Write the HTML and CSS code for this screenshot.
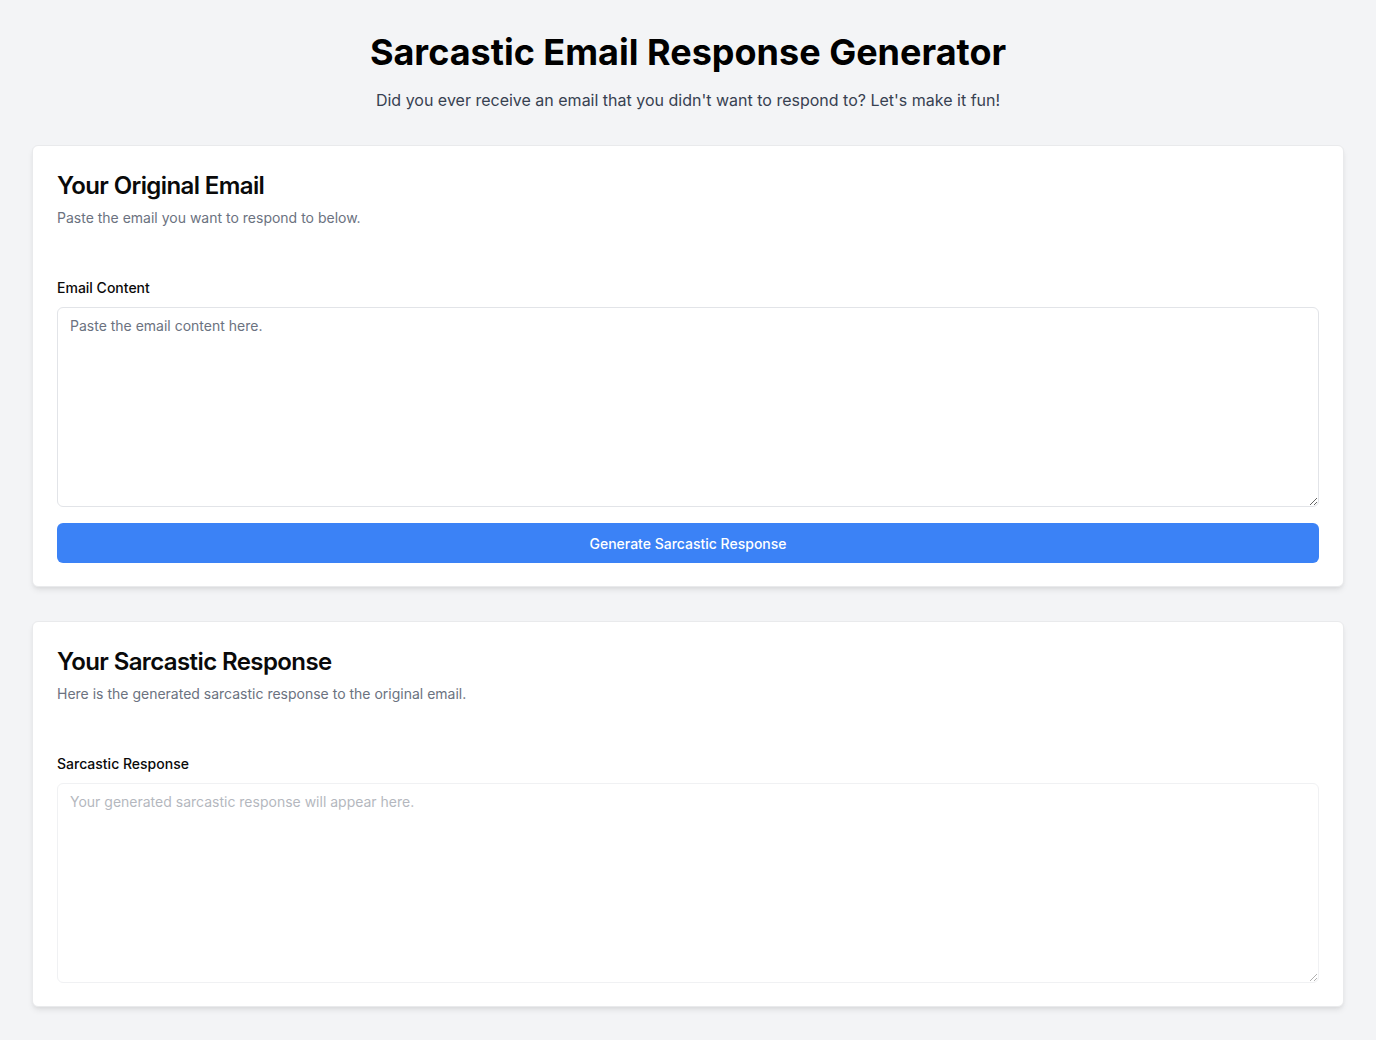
FILE: index.html
```html
<!DOCTYPE html>
<html lang="en">
<head>
<meta charset="utf-8">
<title>Sarcastic Email Response Generator</title>
<link rel="stylesheet" href="styles.css">
</head>
<body>
<main class="page">
  <header class="hero">
    <h1 class="hero-title">Sarcastic Email Response Generator</h1>
    <p class="hero-sub">Did you ever receive an email that you didn't want to respond to? Let's make it fun!</p>
  </header>

  <section class="card">
    <div class="card-header">
      <h2 class="card-title">Your Original Email</h2>
      <p class="card-desc">Paste the email you want to respond to below.</p>
    </div>
    <div class="card-content">
      <label class="field-label" for="email">Email Content</label>
      <textarea id="email" class="field-input" placeholder="Paste the email content here."></textarea>
      <button class="btn" type="button">Generate Sarcastic Response</button>
    </div>
  </section>

  <section class="card">
    <div class="card-header">
      <h2 class="card-title">Your Sarcastic Response</h2>
      <p class="card-desc">Here is the generated sarcastic response to the original email.</p>
    </div>
    <div class="card-content">
      <label class="field-label" for="resp">Sarcastic Response</label>
      <textarea id="resp" class="field-input" placeholder="Your generated sarcastic response will appear here." disabled></textarea>
    </div>
  </section>
</main>
</body>
</html>
```

FILE: styles.css
```css
* { box-sizing: border-box; }
html, body { margin: 0; padding: 0; }
body {
  background: #f3f4f6;
  font-family: Inter, "Noto Sans", "Liberation Sans", sans-serif;
  color: #0a0a0a;
}
.page {
  padding: 32px;
  display: flex;
  flex-direction: column;
  gap: 33px;
}
.hero {
  text-align: center;
}
.hero-title {
  margin: 0;
  font-size: 36px;
  line-height: 40px;
  font-weight: 700;
  color: #000;
}
.hero-sub {
  margin: 16px 0 0;
  font-size: 16px;
  line-height: 24px;
  color: #374151;
}
.card {
  background: #fff;
  border: 1px solid #e9eaec;
  border-radius: 6px;
  box-shadow: 0 4px 6px -1px rgba(0,0,0,0.08), 0 2px 4px -2px rgba(0,0,0,0.08);
}
.card + .card {
  margin-top: 1px;
}
.card-header {
  padding: 24px 24px 24px;
  display: flex;
  flex-direction: column;
  gap: 6px;
}
.card-title {
  margin: 0;
  font-size: 24px;
  line-height: 32px;
  font-weight: 600;
  letter-spacing: -0.6px;
  color: #0a0a0a;
}
.card-desc {
  margin: 0;
  font-size: 14px;
  line-height: 20px;
  color: #6b7280;
}
.card-content {
  padding: 24px 24px 23px;
  display: flex;
  flex-direction: column;
}
.field-label {
  font-size: 14px;
  line-height: 24px;
  font-weight: 500;
  color: #0a0a0a;
  margin-bottom: 7px;
}
.field-input {
  display: block;
  width: 100%;
  height: 200px;
  border: 1px solid #e2e4e8;
  border-radius: 6px;
  padding: 8px 12px;
  font-family: inherit;
  font-size: 14px;
  line-height: 20px;
  color: #0a0a0a;
  background: #fff;
  resize: vertical;
  outline: none;
}
.field-input::placeholder { color: #6b7280; }
.field-input:disabled { opacity: 0.5; }
.btn {
  margin-top: 16px;
  height: 40px;
  width: 100%;
  border: 0;
  border-radius: 6px;
  background: #3b82f6;
  color: #fff;
  font-family: inherit;
  font-size: 14px;
  font-weight: 500;
  cursor: pointer;
}
```
